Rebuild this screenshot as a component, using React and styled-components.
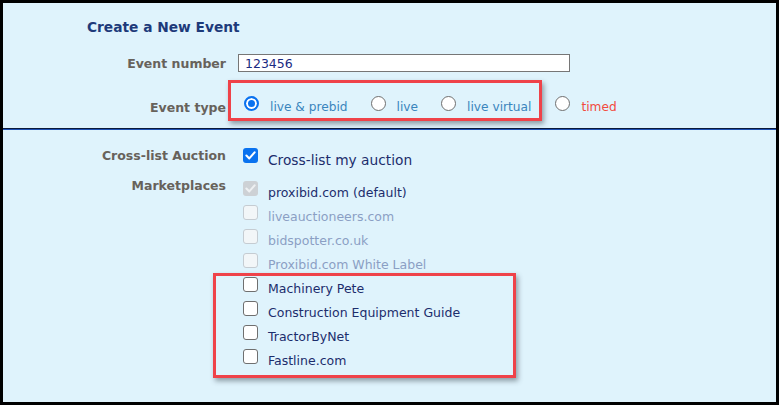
import React from "react";
import styled, { createGlobalStyle } from "styled-components";

const GlobalStyle = createGlobalStyle`
  html, body {
    margin: 0;
    padding: 0;
  }
  body {
    font-family: "DejaVu Sans", Verdana, sans-serif;
    background: #000;
  }
`;

const colors = {
  label: "#67625b",
  navy: "#1c2d6c",
  title: "#1d3a7a",
  option: "#3a85bd",
  timed: "#f24b3e",
  muted: "#8b9fc4",
  red: "#ef4249",
  blue: "#0a72ef",
};

const Frame = styled.div`
  width: 779px;
  height: 405px;
  box-sizing: border-box;
  border: 3px solid #000;
  background: #dff3fc;
  overflow: hidden;
  display: flex;
  flex-direction: column;
`;

const TopSection = styled.section`
  padding: 16px 0 7px;
`;

const BottomSection = styled.section`
  padding-top: 14px;
  flex: 1;
`;

const Title = styled.h2`
  margin: 0 0 18px 84px;
  font-size: 13.75px;
  line-height: 17px;
  font-weight: bold;
  color: ${colors.title};
`;

const Divider = styled.hr`
  margin: 0;
  height: 0;
  border: none;
  border-top: 1px solid #0b1a3a;
  border-bottom: 1px solid #1d4fb3;
`;

const FormGrid = styled.div`
  display: grid;
  grid-template-columns: 223px 1fr;
  column-gap: 12px;
  row-gap: ${({ $gap }) => $gap || 0}px;
`;

const Label = styled.div`
  text-align: right;
  font-weight: bold;
  font-size: 12.5px;
  line-height: ${({ $lh }) => $lh || 15}px;
  color: ${colors.label};
  padding-top: ${({ $top }) => $top || 0}px;
  align-self: ${({ $align }) => $align || "start"};
`;

const TextInput = styled.input`
  width: 332px;
  height: 18px;
  box-sizing: border-box;
  border: 1px solid #767676;
  background: #fff;
  padding: 0 6px;
  font-family: inherit;
  font-size: 12.5px;
  color: #1a2a82;
  outline: none;
`;

const RadioRow = styled.div`
  display: flex;
  align-items: flex-start;
`;

const Highlight = styled.div`
  border: 3px solid ${colors.red};
  box-sizing: border-box;
  box-shadow: 2px 3px 5px rgba(40, 50, 60, 0.45);
`;

const RadioHighlight = styled(Highlight)`
  display: flex;
  margin-left: -10px;
  height: 41px;
  padding: 13px 8px 0 13px;
`;

const ListHighlight = styled(Highlight)`
  width: 303px;
  margin: -4px 0 0 -30px;
  padding: 1px 0 2px 27px;
`;

const Option = styled.label`
  display: flex;
  align-items: center;
  gap: 11px;
  margin-right: ${({ $gap }) => $gap || 0}px;
  margin-left: ${({ $offset }) => $offset || 0}px;
  margin-top: ${({ $top }) => $top || 0}px;
`;

const RadioDot = styled.span`
  width: 15px;
  height: 15px;
  flex: none;
  box-sizing: border-box;
  border-radius: 50%;
  margin-bottom: 7px;
  border: ${({ $checked }) => ($checked ? `2px solid ${colors.blue}` : "1px solid #6f6f6f")};
  background: ${({ $checked }) => ($checked ? colors.blue : "#fff")};
  box-shadow: ${({ $checked }) => ($checked ? "inset 0 0 0 2px #fff" : "none")};
`;

const OptionText = styled.span`
  font-size: 12.2px;
  line-height: 15px;
  color: ${({ $tone }) => ($tone === "timed" ? colors.timed : colors.option)};
  white-space: nowrap;
`;

const CrossList = styled.div`
  display: flex;
  align-items: flex-start;
  gap: 10px;
  height: 30px;
  padding-left: 5px;
`;

const CrossListText = styled.span`
  font-size: 13.75px;
  line-height: 24px;
  margin-top: 3.5px;
  color: ${colors.navy};
`;

const MarketList = styled.div`
  padding: 7px 0 0 5px;
`;

const MarketItem = styled.div`
  display: flex;
  align-items: flex-start;
  gap: 10px;
  height: 24px;
`;

const MarketText = styled.span`
  font-size: 12.5px;
  line-height: 24px;
  white-space: nowrap;
  color: ${({ $muted }) => ($muted ? colors.muted : colors.navy)};
`;

const Box = styled.span`
  width: 15px;
  height: 15px;
  flex: none;
  box-sizing: border-box;
  border-radius: 3px;
  margin-top: ${({ $top }) => $top || 0}px;
  display: flex;
  align-items: center;
  justify-content: center;
  background: ${({ $checked, $disabled }) =>
    $checked ? ($disabled ? "#cdd1d5" : colors.blue) : $disabled ? "#f2f6f8" : "#fff"};
  border: ${({ $checked, $disabled }) =>
    $checked ? "none" : $disabled ? "1px solid #c5ccd2" : "1px solid #6f6f6f"};
`;

function Checkbox({ checked, disabled, top }) {
  return (
    <Box $checked={checked} $disabled={disabled} $top={top}>
      {checked && (
        <svg width="15" height="15" viewBox="0 0 15 15">
          <path
            d="M3.4 7.6 L6.3 10.4 L11.6 4.4"
            fill="none"
            stroke={disabled ? "#eef0f2" : "#fff"}
            strokeWidth="2.1"
            strokeLinecap="round"
            strokeLinejoin="round"
          />
        </svg>
      )}
    </Box>
  );
}

const eventTypes = [
  { id: "live-prebid", text: "live & prebid", checked: true },
  { id: "live", text: "live" },
  { id: "live-virtual", text: "live virtual" },
];

const defaultMarkets = [
  { name: "proxibid.com (default)", checked: true, disabled: true },
  { name: "liveauctioneers.com", disabled: true, muted: true },
  { name: "bidspotter.co.uk", disabled: true, muted: true },
  { name: "Proxibid.com White Label", disabled: true, muted: true },
];

const extraMarkets = [
  { name: "Machinery Pete" },
  { name: "Construction Equipment Guide" },
  { name: "TractorByNet" },
  { name: "Fastline.com" },
];

function Market({ name, checked, disabled, muted }) {
  return (
    <MarketItem>
      <Checkbox checked={checked} disabled={disabled} />
      <MarketText $muted={muted}>{name}</MarketText>
    </MarketItem>
  );
}

export default function App() {
  return (
    <>
      <GlobalStyle />
      <Frame>
        <TopSection>
          <Title>Create a New Event</Title>
          <FormGrid $gap={8}>
            <Label $align="center">Event number</Label>
            <TextInput defaultValue="123456" readOnly />

            <Label $top={20}>Event type</Label>
            <RadioRow>
              <RadioHighlight>
                {eventTypes.map((t, i) => (
                  <Option key={t.id} $gap={i < eventTypes.length - 1 ? 23 : 0}>
                    <RadioDot $checked={t.checked} />
                    <OptionText>{t.text}</OptionText>
                  </Option>
                ))}
              </RadioHighlight>
              <Option $offset={13} $top={16}>
                <RadioDot />
                <OptionText $tone="timed">timed</OptionText>
              </Option>
            </RadioRow>
          </FormGrid>
        </TopSection>

        <Divider />

        <BottomSection>
          <FormGrid>
            <Label $lh={24}>Cross-list Auction</Label>
            <CrossList>
              <Checkbox checked top={4} />
              <CrossListText>Cross-list my auction</CrossListText>
            </CrossList>

            <Label $lh={24}>Marketplaces</Label>
            <MarketList>
              {defaultMarkets.map((m) => (
                <Market key={m.name} {...m} />
              ))}
              <ListHighlight>
                {extraMarkets.map((m) => (
                  <Market key={m.name} {...m} />
                ))}
              </ListHighlight>
            </MarketList>
          </FormGrid>
        </BottomSection>
      </Frame>
    </>
  );
}
